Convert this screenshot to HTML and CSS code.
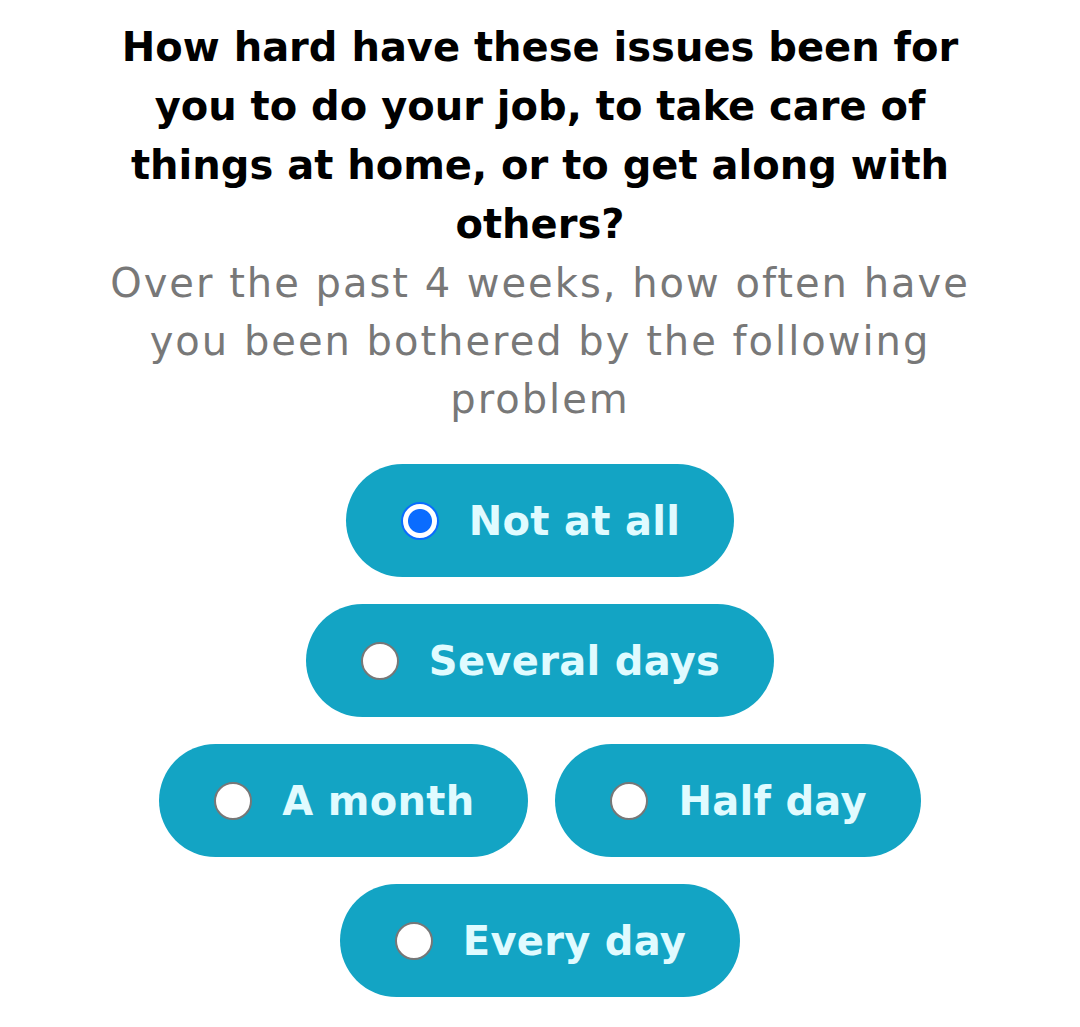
FILE: index.html
```html
<!DOCTYPE html>
<html lang="en">
<head>
<meta charset="utf-8">
<title>Question</title>
<link rel="stylesheet" href="styles.css">
</head>
<body>
<main class="page">
  <h1 class="title">How hard have these issues been for you to do your job, to take care of things at home, or to get along with others?</h1>
  <p class="subtitle">Over the past 4 weeks, how often have you been bothered by the following problem</p>
  <div class="options">
    <div class="row">
      <label class="option"><span class="radio checked"></span><span class="label">Not at all</span></label>
    </div>
    <div class="row">
      <label class="option"><span class="radio"></span><span class="label">Several days</span></label>
    </div>
    <div class="row">
      <label class="option"><span class="radio"></span><span class="label">A month</span></label>
      <label class="option"><span class="radio"></span><span class="label">Half day</span></label>
    </div>
    <div class="row">
      <label class="option"><span class="radio"></span><span class="label">Every day</span></label>
    </div>
  </div>
</main>
</body>
</html>
```

FILE: styles.css
```css
html, body {
  margin: 0;
  padding: 0;
  background: #ffffff;
}
body {
  font-family: "DejaVu Sans", "Noto Sans", sans-serif;
}
.page {
  display: flex;
  flex-direction: column;
  align-items: center;
  padding-top: 18px;
}
.title {
  margin: 0;
  width: 880px;
  text-align: center;
  font-size: 40px;
  line-height: 59px;
  font-weight: 700;
  color: #000;
}
.subtitle {
  margin: 0;
  width: 880px;
  text-align: center;
  font-size: 40px;
  line-height: 58px;
  font-weight: 400;
  letter-spacing: 2px;
  color: #787878;
}
.options {
  margin-top: 36px;
  display: flex;
  flex-direction: column;
  align-items: center;
  gap: 27px;
}
.row {
  display: flex;
  gap: 27px;
  justify-content: center;
}
.option {
  display: flex;
  align-items: center;
  gap: 30px;
  height: 113px;
  padding: 0 54px 0 55px;
  box-sizing: border-box;
  border-radius: 57px;
  background: #13a4c4;
}
.radio {
  width: 38px;
  height: 38px;
  box-sizing: border-box;
  border-radius: 50%;
  background: #fff;
  border: 2px solid #777;
  flex: none;
}
.radio.checked {
  border: 2px solid #0a6cff;
  background: radial-gradient(circle, #0a6cff 0 11.5px, #fff 12.5px);
}
.label {
  font-size: 40px;
  font-weight: 700;
  letter-spacing: 0.3px;
  color: #e0fbff;
}
```
